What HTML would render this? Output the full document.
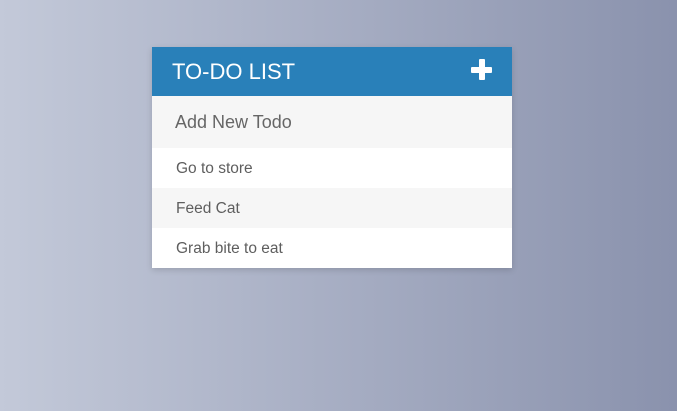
<!DOCTYPE html>
<html><head><style>
html,body{margin:0;padding:0;width:677px;height:411px;overflow:hidden;}
body{background:linear-gradient(to right,#c3c9d9,#8a92ad);font-family:"Liberation Sans",sans-serif;position:relative;}
.card{position:absolute;left:152px;top:47px;width:360px;box-shadow:0 2px 6px rgba(0,0,0,0.15);}
.hd{height:49px;background:#2980b9;color:#fff;font-size:22px;line-height:50px;padding-left:20px;position:relative;}
.plus{position:absolute;right:20px;top:12px;width:21px;height:21px;}
.plus:before{content:"";position:absolute;left:0;top:7.5px;width:21px;height:6px;background:#fff;border-radius:1px;}
.plus:after{content:"";position:absolute;left:7.5px;top:0;width:6px;height:21px;background:#fff;border-radius:1px;}
.in{height:52px;background:#f6f6f6;color:#666;font-size:18px;line-height:52px;padding-left:23px;}
.it{height:40px;line-height:41px;font-size:15.5px;color:#5e5e5e;padding-left:24px;background:#fff;}
.it.g{background:#f6f6f6;}
</style></head><body>
<div class="card">
<div class="hd">TO-DO LIST<div class="plus"></div></div>
<div class="in">Add New Todo</div>
<div class="it">Go to store</div>
<div class="it g">Feed Cat</div>
<div class="it">Grab bite to eat</div>
</div>
</body></html>
